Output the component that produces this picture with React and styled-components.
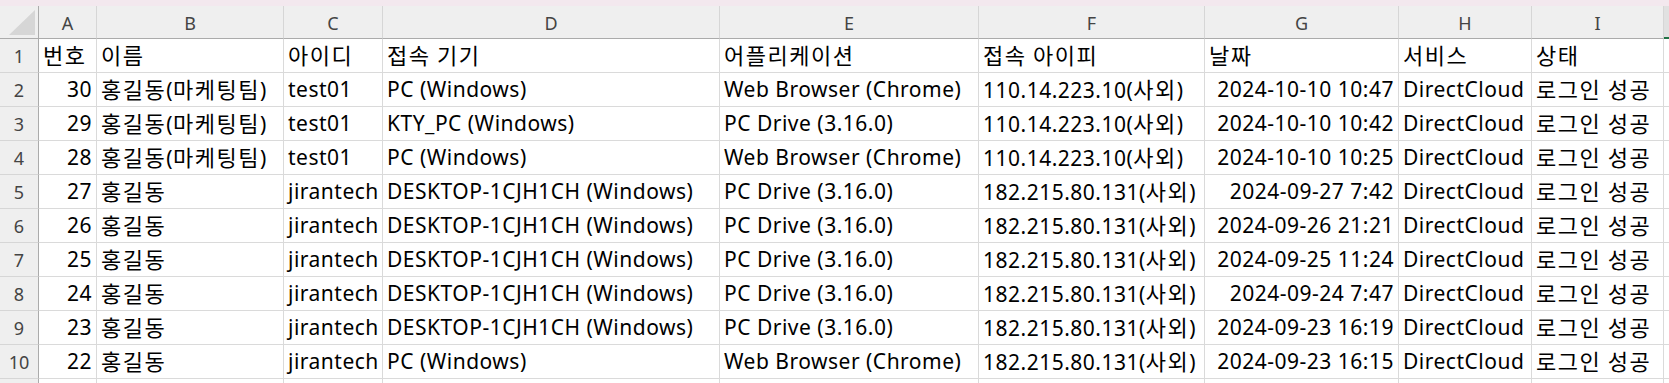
import React from "react";
import styled, { createGlobalStyle } from "styled-components";

const Global = createGlobalStyle`
  html, body { margin: 0; padding: 0; background: #ffffff; overflow: hidden; }
  body { font-family: "Noto Sans", "Noto Sans CJK KR", sans-serif; }
`;

const COLS = "39px 58px 187px 99px 337px 259px 226px 194px 133px 132px 1fr";

const Page = styled.div`
  width: 1669px;
  height: 383px;
  overflow: hidden;
  display: flex;
  flex-direction: column;
`;

const TopStrip = styled.div`
  height: 6px;
  flex: none;
  background: #f3e8ee;
`;

const Grid = styled.div`
  display: grid;
  grid-template-columns: ${COLS};
  grid-auto-rows: 34px;
  grid-template-rows: 33px;
`;

const Corner = styled.div`
  position: relative;
  background: #efefef;
  border-right: 1px solid #ababab;
  border-bottom: 1px solid #ababab;
  box-sizing: border-box;
  &::after {
    content: "";
    position: absolute;
    right: 3px;
    bottom: 3px;
    width: 0;
    height: 0;
    border-style: solid;
    border-width: 0 0 25px 26px;
    border-color: transparent transparent #d6d6d6 transparent;
  }
`;

const ColHead = styled.div`
  box-sizing: border-box;
  background: ${(p) => (p.$active ? "#e1e1e1" : "#efefef")};
  border-right: 1px solid ${(p) => (p.$active ? "#ababab" : "#d6d6d6")};
  border-bottom: ${(p) => (p.$active ? "2px solid #217346" : "1px solid #ababab")};
  display: flex;
  align-items: center;
  justify-content: center;
  font-size: 18px;
  color: #444444;
  padding-top: 2px;
`;

const RowHead = styled.div`
  box-sizing: border-box;
  background: #efefef;
  border-right: 1px solid #ababab;
  border-bottom: 1px solid #d6d6d6;
  display: flex;
  align-items: center;
  justify-content: center;
  font-size: 18px;
  color: #444444;
  padding-top: 1px;
`;

const Cell = styled.div`
  box-sizing: border-box;
  border-right: 1px solid #dadada;
  border-bottom: 1px solid #dadada;
  display: flex;
  align-items: center;
  justify-content: ${(p) => (p.$right ? "flex-end" : "flex-start")};
  padding: 1px 4px 0 4px;
  font-size: 21px;
  letter-spacing: 0.5px;
  color: #000000;
  white-space: pre;
  overflow: hidden;
`;

const Content = styled.span`
  display: inline-block;
  line-height: 1.2;
`;

const Ko = styled.span`
  font-family: "Noto Sans CJK KR", sans-serif;
  font-size: 22px;
  letter-spacing: 1.5px;
  line-height: 1;
`;

const letters = ["A", "B", "C", "D", "E", "F", "G", "H", "I", "J"];

const header = ["번호", "이름", "아이디", "접속 기기", "어플리케이션", "접속 아이피", "날짜", "서비스", "상태", ""];

const rows = [
  ["30", "홍길동(마케팅팀)", "test01", "PC (Windows)", "Web Browser (Chrome)", "110.14.223.10(사외)", "2024-10-10 10:47"],
  ["29", "홍길동(마케팅팀)", "test01", "KTY_PC (Windows)", "PC Drive (3.16.0)", "110.14.223.10(사외)", "2024-10-10 10:42"],
  ["28", "홍길동(마케팅팀)", "test01", "PC (Windows)", "Web Browser (Chrome)", "110.14.223.10(사외)", "2024-10-10 10:25"],
  ["27", "홍길동", "jirantech", "DESKTOP-1CJH1CH (Windows)", "PC Drive (3.16.0)", "182.215.80.131(사외)", "2024-09-27 7:42"],
  ["26", "홍길동", "jirantech", "DESKTOP-1CJH1CH (Windows)", "PC Drive (3.16.0)", "182.215.80.131(사외)", "2024-09-26 21:21"],
  ["25", "홍길동", "jirantech", "DESKTOP-1CJH1CH (Windows)", "PC Drive (3.16.0)", "182.215.80.131(사외)", "2024-09-25 11:24"],
  ["24", "홍길동", "jirantech", "DESKTOP-1CJH1CH (Windows)", "PC Drive (3.16.0)", "182.215.80.131(사외)", "2024-09-24 7:47"],
  ["23", "홍길동", "jirantech", "DESKTOP-1CJH1CH (Windows)", "PC Drive (3.16.0)", "182.215.80.131(사외)", "2024-09-23 16:19"],
  ["22", "홍길동", "jirantech", "PC (Windows)", "Web Browser (Chrome)", "182.215.80.131(사외)", "2024-09-23 16:15"],
].map((r) => [...r, "DirectCloud", "로그인 성공", ""]);

const rightCols = new Set([0, 6]);

function Text({ value }) {
  const parts = value.split(/([가-힣](?:[가-힣 ]*[가-힣])?)/);
  return (
    <Content>
      {parts.map((p, i) =>
        /[가-힣]/.test(p) ? <Ko key={i}>{p}</Ko> : p ? <span key={i}>{p}</span> : null
      )}
    </Content>
  );
}

export default function App() {
  return (
    <Page>
      <Global />
      <TopStrip />
      <Grid>
        <Corner />
        {letters.map((l) => (
          <ColHead key={l} $active={l === "J"}>
            {l === "J" ? "" : l}
          </ColHead>
        ))}
        <RowHead>1</RowHead>
        {header.map((h, i) => (
          <Cell key={"h" + i}>{h && <Text value={h} />}</Cell>
        ))}
        {rows.map((r, ri) => (
          <React.Fragment key={ri}>
            <RowHead>{ri + 2}</RowHead>
            {r.map((v, ci) => (
              <Cell key={ci} $right={rightCols.has(ci)}>
                {v && <Text value={v} />}
              </Cell>
            ))}
          </React.Fragment>
        ))}
        <RowHead />
        {letters.map((l) => (
          <Cell key={"e" + l} />
        ))}
      </Grid>
    </Page>
  );
}
